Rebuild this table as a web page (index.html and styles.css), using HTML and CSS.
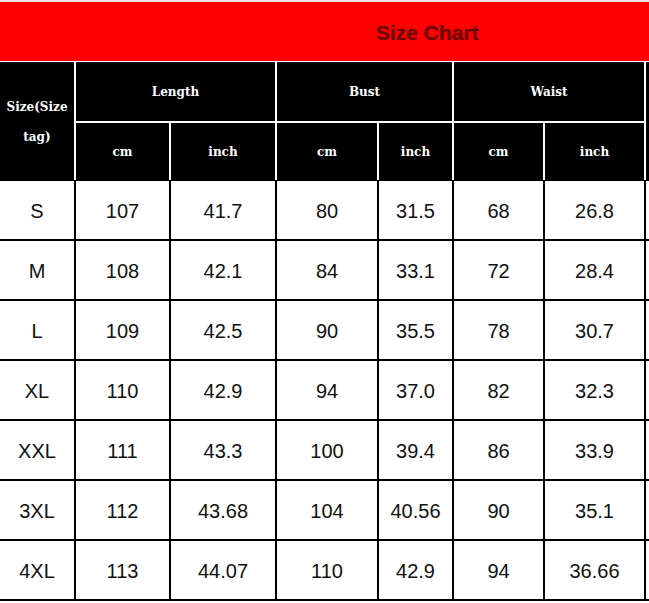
FILE: index.html
```html
<!DOCTYPE html>
<html>
<head>
<meta charset="utf-8">
<link rel="stylesheet" href="styles.css">
</head>
<body>
<div class="page">
  <div class="topstrip"></div>
  <div class="banner"><span class="banner-title">Size Chart</span></div>
  <div class="sep"></div>
  <div class="head">
    <div class="h h-size">Size(Size<br>tag)</div>
    <div class="h h-group g1">Length</div>
    <div class="h h-group g2">Bust</div>
    <div class="h h-group g3">Waist</div>
    <div class="h h-end"></div>
    <div class="h">cm</div>
    <div class="h">inch</div>
    <div class="h">cm</div>
    <div class="h">inch</div>
    <div class="h">cm</div>
    <div class="h">inch</div>
  </div>
  <div class="body">
    <div class="c">S</div><div class="c">107</div><div class="c">41.7</div><div class="c">80</div><div class="c">31.5</div><div class="c">68</div><div class="c">26.8</div><div class="c e"></div>
    <div class="c">M</div><div class="c">108</div><div class="c">42.1</div><div class="c">84</div><div class="c">33.1</div><div class="c">72</div><div class="c">28.4</div><div class="c e"></div>
    <div class="c">L</div><div class="c">109</div><div class="c">42.5</div><div class="c">90</div><div class="c">35.5</div><div class="c">78</div><div class="c">30.7</div><div class="c e"></div>
    <div class="c">XL</div><div class="c">110</div><div class="c">42.9</div><div class="c">94</div><div class="c">37.0</div><div class="c">82</div><div class="c">32.3</div><div class="c e"></div>
    <div class="c">XXL</div><div class="c">111</div><div class="c">43.3</div><div class="c">100</div><div class="c">39.4</div><div class="c">86</div><div class="c">33.9</div><div class="c e"></div>
    <div class="c">3XL</div><div class="c">112</div><div class="c">43.68</div><div class="c">104</div><div class="c">40.56</div><div class="c">90</div><div class="c">35.1</div><div class="c e"></div>
    <div class="c">4XL</div><div class="c">113</div><div class="c">44.07</div><div class="c">110</div><div class="c">42.9</div><div class="c">94</div><div class="c">36.66</div><div class="c e"></div>
  </div>
</div>
</body>
</html>
```
FILE: styles.css
```css
html, body {
  margin: 0;
  padding: 0;
  background: #ffffff;
}
.page {
  width: 649px;
  height: 603px;
  overflow: hidden;
  background: #ffffff;
}
.topstrip {
  height: 2px;
  background: #f2e2e2;
}
.banner {
  height: 59px;
  background: #fe0000;
  display: flex;
  align-items: center;
  padding-left: 376px;
  padding-top: 2px;
  box-sizing: border-box;
}
.banner-title {
  font-family: "Liberation Sans", Arial, sans-serif;
  font-weight: bold;
  font-size: 21px;
  color: #6e0404;
  text-shadow: 0 0 1px rgba(90, 0, 0, 0.6);
}
.sep {
  height: 1px;
  background: #ffffff;
}
.head {
  display: grid;
  grid-template-columns: 74px 93px 104px 100px 73px 89px 99px 3px;
  grid-template-rows: 59px 57px;
  column-gap: 2px;
  row-gap: 2px;
  background: #ffffff;
}
.h {
  background: #000000;
  color: #ffffff;
  font-family: "DejaVu Serif", Georgia, serif;
  font-weight: bold;
  font-size: 12px;
  display: flex;
  align-items: center;
  justify-content: center;
  text-align: center;
}
.h-size {
  grid-row: 1 / span 2;
  line-height: 30px;
  padding-top: 2px;
  box-sizing: border-box;
}
.g1 { grid-column: 2 / span 2; }
.g2 { grid-column: 4 / span 2; }
.g3 { grid-column: 6 / span 2; }
.h-end {
  grid-column: 8;
  grid-row: 1 / span 2;
}
.body {
  display: grid;
  grid-template-columns: 74px 93px 104px 100px 73px 89px 99px 3px;
  grid-auto-rows: 58px;
  column-gap: 2px;
  row-gap: 2px;
  padding-top: 1px;
  padding-bottom: 2px;
  background: #000000;
}
.c {
  background: #ffffff;
  color: #111111;
  font-family: "Liberation Sans", Arial, sans-serif;
  font-size: 20px;
  padding-top: 3px;
  box-sizing: border-box;
  display: flex;
  align-items: center;
  justify-content: center;
}
```
